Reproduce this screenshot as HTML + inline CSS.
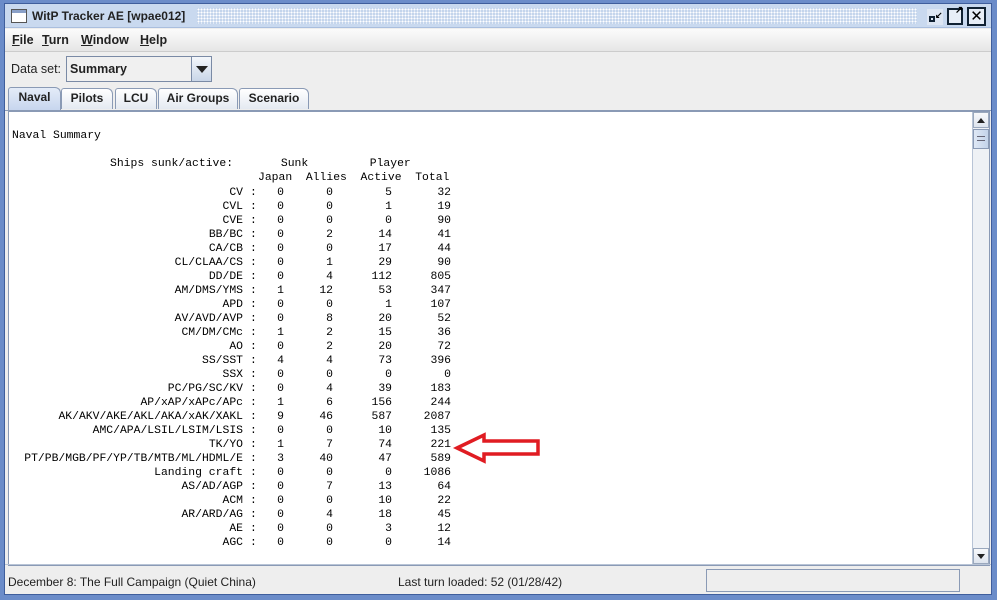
<!DOCTYPE html>
<html><head><style>
*{margin:0;padding:0;box-sizing:border-box}
body{width:997px;height:600px;background:#6b8cc9;position:relative;overflow:hidden;font-family:"Liberation Sans",sans-serif;font-size:12px;color:#000}
.win{position:absolute;left:4px;top:3px;width:988px;height:592px;background:#eeeeee;border:1px solid #3f5e9c}
.title{position:absolute;left:0;top:0;width:986px;height:24px;background:#c9d9ef;border-bottom:1px solid #a9bede}
.dots{position:absolute;left:192px;top:4px;width:720px;height:16px;background-image:radial-gradient(#fff 0.8px,transparent 1px);background-size:3px 3px;background-color:#c4d5ec}
.abs{position:absolute}
.mono{font-family:"Liberation Mono",monospace;font-size:11.4px;white-space:pre}
.row{position:absolute;height:14px;line-height:14px;left:0;width:460px;font-family:"Liberation Mono",monospace;font-size:11.4px}
.row span{position:absolute;text-align:right;white-space:pre}
.l{right:229px}.c{left:238px}.j{right:188px}.a{right:139px}.ac{right:80px}.t{right:21px}
.tab{position:absolute;top:84px;height:21px;border:1px solid #8a9ab5;border-bottom:none;background:linear-gradient(#fff,#e4e9f1);font-weight:bold;font-size:12px;line-height:19px;text-align:center;color:#222;border-radius:3px 6px 0 0}
</style></head><body>
<div class="win">
 <div class="title">
  <div class="abs" style="left:6px;top:5px;width:16px;height:14px;border:1px solid #555;background:#fff"><div style="height:3px;background:#8aa0c8"></div></div>
  <div class="abs" style="left:27px;top:5px;font-size:12px;font-weight:bold;color:#222">WitP Tracker AE [wpae012]</div>
  <div class="dots"></div>
  <div class="abs" style="left:922px;top:5px;width:16px;height:16px;background:#dde6f3"><div class="abs" style="left:2px;top:7px;width:6px;height:6px;border:2px solid #123"></div><div class="abs" style="left:8px;top:1px;font-size:9px;font-weight:bold">↙</div></div>
  <div class="abs" style="left:942px;top:4px;width:16px;height:17px;border:2px solid #123;background:#e8eef7"><div class="abs" style="left:6px;top:-5px;font-size:10px;font-weight:bold">↗</div></div>
  <div class="abs" style="left:962px;top:3px;width:19px;height:19px;border:2px solid #123;background:#e8eef7;font-size:15px;line-height:15px;text-align:center">✕</div>
 </div>
 <div class="abs" style="left:0;top:25px;width:986px;height:23px;background:linear-gradient(#fbfbfb,#e6e6e6);border-bottom:1px solid #ccc;font-size:12.5px;font-weight:bold;color:#222">
  <span class="abs" style="left:7px;top:4px"><u>F</u>ile</span>
  <span class="abs" style="left:37px;top:4px"><u>T</u>urn</span>
  <span class="abs" style="left:76px;top:4px"><u>W</u>indow</span>
  <span class="abs" style="left:135px;top:4px"><u>H</u>elp</span>
 </div>
 <div class="abs" style="left:6px;top:58px;font-size:12.5px;color:#222">Data set:</div>
 <div class="abs" style="left:61px;top:52px;width:146px;height:26px;border:1px solid #7a8aa5;background:#f0f0f0">
  <div class="abs" style="left:3px;top:5px;font-weight:bold;font-size:12.5px;color:#222">Summary</div>
  <div class="abs" style="left:124px;top:0;width:20px;height:24px;border-left:1px solid #7a8aa5;background:linear-gradient(#f4f7fb,#c9d6e8)"><div class="abs" style="left:4px;top:9px;border-left:6px solid transparent;border-right:6px solid transparent;border-top:7px solid #222"></div></div>
 </div>
 <div class="tab" style="left:3px;width:53px;background:linear-gradient(#e4ecf8,#c7d6ee);height:23px;top:83px">Naval</div>
 <div class="tab" style="left:56px;width:52px">Pilots</div>
 <div class="tab" style="left:110px;width:42px">LCU</div>
 <div class="tab" style="left:153px;width:80px">Air Groups</div>
 <div class="tab" style="left:234px;width:70px">Scenario</div>
 <div class="abs" style="left:0;top:106px;width:986px;height:1px;background:#8a9ab5"></div>
 <div class="abs" style="left:3px;top:107px;width:982px;height:455px;border:1px solid #8a9ab5;background:#fff;overflow:hidden">
  <div class="abs mono" style="left:3px;top:18px">Naval Summary</div>
  <div class="abs mono" style="left:101px;top:46px">Ships sunk/active:       Sunk         Player</div>
  <div class="abs mono" style="left:249px;top:60px">Japan  Allies  Active  Total</div>
  <div class="abs" style="left:3px;top:74px">
<div class="row" style="top:0"><span class="l">CV</span><span class="c">:</span><span class="j">0</span><span class="a">0</span><span class="ac">5</span><span class="t">32</span></div>
<div class="row" style="top:14px"><span class="l">CVL</span><span class="c">:</span><span class="j">0</span><span class="a">0</span><span class="ac">1</span><span class="t">19</span></div>
<div class="row" style="top:28px"><span class="l">CVE</span><span class="c">:</span><span class="j">0</span><span class="a">0</span><span class="ac">0</span><span class="t">90</span></div>
<div class="row" style="top:42px"><span class="l">BB/BC</span><span class="c">:</span><span class="j">0</span><span class="a">2</span><span class="ac">14</span><span class="t">41</span></div>
<div class="row" style="top:56px"><span class="l">CA/CB</span><span class="c">:</span><span class="j">0</span><span class="a">0</span><span class="ac">17</span><span class="t">44</span></div>
<div class="row" style="top:70px"><span class="l">CL/CLAA/CS</span><span class="c">:</span><span class="j">0</span><span class="a">1</span><span class="ac">29</span><span class="t">90</span></div>
<div class="row" style="top:84px"><span class="l">DD/DE</span><span class="c">:</span><span class="j">0</span><span class="a">4</span><span class="ac">112</span><span class="t">805</span></div>
<div class="row" style="top:98px"><span class="l">AM/DMS/YMS</span><span class="c">:</span><span class="j">1</span><span class="a">12</span><span class="ac">53</span><span class="t">347</span></div>
<div class="row" style="top:112px"><span class="l">APD</span><span class="c">:</span><span class="j">0</span><span class="a">0</span><span class="ac">1</span><span class="t">107</span></div>
<div class="row" style="top:126px"><span class="l">AV/AVD/AVP</span><span class="c">:</span><span class="j">0</span><span class="a">8</span><span class="ac">20</span><span class="t">52</span></div>
<div class="row" style="top:140px"><span class="l">CM/DM/CMc</span><span class="c">:</span><span class="j">1</span><span class="a">2</span><span class="ac">15</span><span class="t">36</span></div>
<div class="row" style="top:154px"><span class="l">AO</span><span class="c">:</span><span class="j">0</span><span class="a">2</span><span class="ac">20</span><span class="t">72</span></div>
<div class="row" style="top:168px"><span class="l">SS/SST</span><span class="c">:</span><span class="j">4</span><span class="a">4</span><span class="ac">73</span><span class="t">396</span></div>
<div class="row" style="top:182px"><span class="l">SSX</span><span class="c">:</span><span class="j">0</span><span class="a">0</span><span class="ac">0</span><span class="t">0</span></div>
<div class="row" style="top:196px"><span class="l">PC/PG/SC/KV</span><span class="c">:</span><span class="j">0</span><span class="a">4</span><span class="ac">39</span><span class="t">183</span></div>
<div class="row" style="top:210px"><span class="l">AP/xAP/xAPc/APc</span><span class="c">:</span><span class="j">1</span><span class="a">6</span><span class="ac">156</span><span class="t">244</span></div>
<div class="row" style="top:224px"><span class="l">AK/AKV/AKE/AKL/AKA/xAK/XAKL</span><span class="c">:</span><span class="j">9</span><span class="a">46</span><span class="ac">587</span><span class="t">2087</span></div>
<div class="row" style="top:238px"><span class="l">AMC/APA/LSIL/LSIM/LSIS</span><span class="c">:</span><span class="j">0</span><span class="a">0</span><span class="ac">10</span><span class="t">135</span></div>
<div class="row" style="top:252px"><span class="l">TK/YO</span><span class="c">:</span><span class="j">1</span><span class="a">7</span><span class="ac">74</span><span class="t">221</span></div>
<div class="row" style="top:266px"><span class="l">PT/PB/MGB/PF/YP/TB/MTB/ML/HDML/E</span><span class="c">:</span><span class="j">3</span><span class="a">40</span><span class="ac">47</span><span class="t">589</span></div>
<div class="row" style="top:280px"><span class="l">Landing craft</span><span class="c">:</span><span class="j">0</span><span class="a">0</span><span class="ac">0</span><span class="t">1086</span></div>
<div class="row" style="top:294px"><span class="l">AS/AD/AGP</span><span class="c">:</span><span class="j">0</span><span class="a">7</span><span class="ac">13</span><span class="t">64</span></div>
<div class="row" style="top:308px"><span class="l">ACM</span><span class="c">:</span><span class="j">0</span><span class="a">0</span><span class="ac">10</span><span class="t">22</span></div>
<div class="row" style="top:322px"><span class="l">AR/ARD/AG</span><span class="c">:</span><span class="j">0</span><span class="a">4</span><span class="ac">18</span><span class="t">45</span></div>
<div class="row" style="top:336px"><span class="l">AE</span><span class="c">:</span><span class="j">0</span><span class="a">0</span><span class="ac">3</span><span class="t">12</span></div>
<div class="row" style="top:350px"><span class="l">AGC</span><span class="c">:</span><span class="j">0</span><span class="a">0</span><span class="ac">0</span><span class="t">14</span></div>
  </div>
  <div class="abs" style="right:0;top:0;width:17px;height:453px;background:#eef1f5;border-left:1px solid #b8c4d6">
   <div class="abs" style="left:0;top:0;width:16px;height:16px;background:linear-gradient(#f8f9fb,#dde4ee);border:1px solid #9aa8bd"><div class="abs" style="left:3px;top:5px;border-left:4px solid transparent;border-right:4px solid transparent;border-bottom:5px solid #222"></div></div>
   <div class="abs" style="left:0;top:17px;width:16px;height:20px;background:linear-gradient(90deg,#dfe8f5,#c3d3ea);border:1px solid #8a9ab5"><div class="abs" style="left:3px;top:6px;width:8px;height:5px;border-top:1px solid #667;border-bottom:1px solid #667"></div></div>
   <div class="abs" style="left:0;top:436px;width:16px;height:16px;background:linear-gradient(#f8f9fb,#dde4ee);border:1px solid #9aa8bd"><div class="abs" style="left:3px;top:5px;border-left:4px solid transparent;border-right:4px solid transparent;border-top:5px solid #222"></div></div>
  </div>
 </div>
 <svg class="abs" style="left:447px;top:428px" width="92" height="32"><path d="M5 16 L32 3 L32 9 L86 9 L86 22 L32 22 L32 29 Z" fill="none" stroke="#e01c22" stroke-width="3.5" stroke-linejoin="miter"/></svg>
 <div class="abs" style="left:0;top:560px;width:986px;height:1px;background:#b8c4d6"></div>
 <div class="abs" style="left:3px;top:571px;font-size:12px;color:#222">December 8: The Full Campaign (Quiet China)</div>
 <div class="abs" style="left:393px;top:571px;font-size:12px;color:#222">Last turn loaded: 52 (01/28/42)</div>
 <div class="abs" style="left:701px;top:565px;width:254px;height:23px;border:1px solid #8a9ab5;background:#eeeeee"></div>
</div>
</body></html>
